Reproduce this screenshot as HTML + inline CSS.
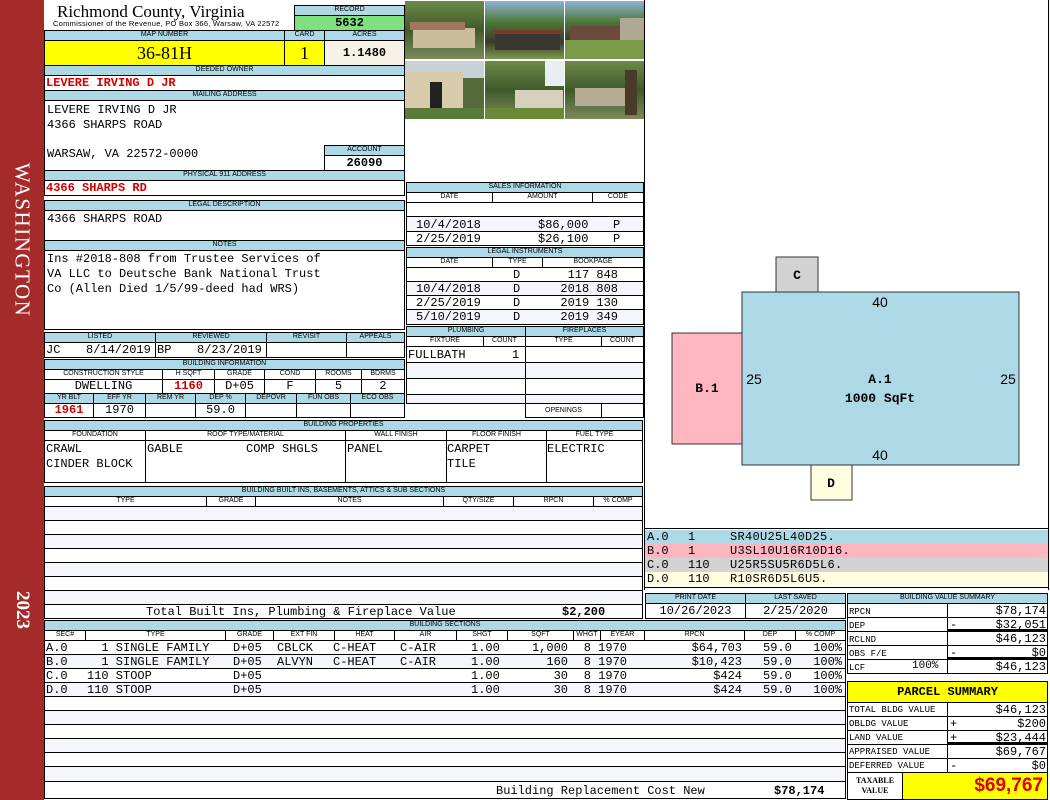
<!DOCTYPE html>
<html><head><meta charset="utf-8"><style>
*{margin:0;padding:0;box-sizing:border-box}
body{width:1050px;height:800px;position:relative;background:#fff;overflow:hidden;font-family:"Liberation Mono",monospace;color:#000}
.a{position:absolute}
.h{position:absolute;background:#add8e6;border:1px solid #000;font:7px/8px "Liberation Sans",sans-serif;text-align:center;white-space:nowrap;overflow:hidden}
.c{position:absolute;border:1px solid #000;font:8px/9px "Liberation Sans",sans-serif;text-align:center;white-space:nowrap;background:#fff}
.b{position:absolute;border:1px solid #000;background:#fff}
.m{position:absolute;font:12px/13px "Liberation Mono",monospace;white-space:pre}
.r{color:#d40000;font-weight:bold}
.st{background:#f4f6fb}
.t{position:absolute;font:12px/14px "Liberation Mono",monospace;white-space:pre}
.rt{position:absolute;font:12px/14px "Liberation Mono",monospace;white-space:pre;text-align:right}
</style></head><body>
<!-- sidebar -->
<div class="a" style="left:0;top:0;width:44px;height:800px;background:#a52a2a"></div>
<div class="a" style="left:22px;top:240px;width:0;height:0"><div style="position:absolute;transform:translate(-50%,-50%) rotate(90deg);color:#fff;font:21px 'Liberation Serif',serif;letter-spacing:1.5px;white-space:nowrap">WASHINGTON</div></div>
<div class="a" style="left:22px;top:610px;width:0;height:0"><div style="position:absolute;transform:translate(-50%,-50%) rotate(90deg);color:#fff;font:bold 19px 'Liberation Serif',serif;white-space:nowrap">2023</div></div>

<!-- title -->
<div class="a" style="left:57px;top:2px;font:17px/19px 'Liberation Serif',serif">Richmond County, Virginia</div>
<div class="a" style="left:53px;top:20px;font:7.5px/8px 'Liberation Sans',sans-serif;letter-spacing:0.25px">Commissioner of the Revenue, PO Box 366, Warsaw, VA 22572</div>
<div class="h" style="left:294px;top:5px;width:111px;height:11px">RECORD</div>
<div class="b" style="left:294px;top:15px;width:111px;height:16px;background:#7fe07f;font:bold 12px/14px 'Liberation Mono';text-align:center">5632</div>
<div class="h" style="left:44px;top:30px;width:241px;height:11px">MAP NUMBER</div>
<div class="h" style="left:284px;top:30px;width:41px;height:11px">CARD</div>
<div class="h" style="left:324px;top:30px;width:81px;height:11px">ACRES</div>
<div class="b" style="left:44px;top:40px;width:241px;height:26px;background:#ffff00;font:18px/24px 'Liberation Serif',serif;text-align:center">36-81H</div>
<div class="b" style="left:284px;top:40px;width:41px;height:26px;background:#ffff00;font:18px/24px 'Liberation Serif',serif;text-align:center">1</div>
<div class="b" style="left:324px;top:40px;width:81px;height:26px;background:#f5f3e6;font:bold 12px/24px 'Liberation Mono';text-align:center">1.1480</div>
<div class="h" style="left:44px;top:65px;width:361px;height:11px">DEEDED OWNER</div>
<div class="b" style="left:44px;top:75px;width:361px;height:16px"></div>
<div class="m r" style="left:46px;top:77px">LEVERE IRVING D JR</div>
<div class="h" style="left:44px;top:90px;width:361px;height:11px">MAILING ADDRESS</div>
<div class="b" style="left:44px;top:100px;width:361px;height:71px"></div>
<div class="m" style="left:47px;top:103px;line-height:15px">LEVERE IRVING D JR
4366 SHARPS ROAD</div>
<div class="m" style="left:47px;top:148px">WARSAW, VA 22572-0000</div>
<div class="h" style="left:324px;top:145px;width:81px;height:11px">ACCOUNT</div>
<div class="b" style="left:324px;top:155px;width:81px;height:16px;font:bold 12px/14px 'Liberation Mono';text-align:center">26090</div>
<div class="h" style="left:44px;top:170px;width:361px;height:11px">PHYSICAL 911 ADDRESS</div>
<div class="b" style="left:44px;top:180px;width:361px;height:16px"></div>
<div class="m r" style="left:46px;top:182px">4366 SHARPS RD</div>
<div class="h" style="left:44px;top:200px;width:361px;height:11px">LEGAL DESCRIPTION</div>
<div class="b" style="left:44px;top:210px;width:361px;height:31px"></div>
<div class="m" style="left:47px;top:213px">4366 SHARPS ROAD</div>
<div class="h" style="left:44px;top:240px;width:361px;height:11px">NOTES</div>
<div class="b" style="left:44px;top:250px;width:361px;height:80px"></div>
<div class="m" style="left:47px;top:252px;line-height:15px">Ins #2018-808 from Trustee Services of
VA LLC to Deutsche Bank National Trust
Co (Allen Died 1/5/99-deed had WRS)</div>

<!-- listed -->
<div class="h" style="left:44px;top:332px;width:112px;height:11px">LISTED</div>
<div class="h" style="left:155px;top:332px;width:112px;height:11px">REVIEWED</div>
<div class="h" style="left:266px;top:332px;width:81px;height:11px">REVISIT</div>
<div class="h" style="left:346px;top:332px;width:59px;height:11px">APPEALS</div>
<div class="b" style="left:44px;top:342px;width:112px;height:16px"></div>
<div class="b" style="left:155px;top:342px;width:112px;height:16px"></div>
<div class="b" style="left:266px;top:342px;width:81px;height:16px"></div>
<div class="b" style="left:346px;top:342px;width:59px;height:16px"></div>
<div class="m" style="left:46px;top:344px">JC</div><div class="m" style="left:86px;top:344px">8/14/2019</div>
<div class="m" style="left:157px;top:344px">BP</div><div class="m" style="left:197px;top:344px">8/23/2019</div>

<!-- building info -->
<div class="h" style="left:44px;top:359px;width:361px;height:11px">BUILDING INFORMATION</div>
<div class="h" style="left:44px;top:369px;width:119px;height:11px;background:#fff">CONSTRUCTION STYLE</div>
<div class="h" style="left:162px;top:369px;width:53px;height:11px;background:#fff">H SQFT</div>
<div class="h" style="left:214px;top:369px;width:51px;height:11px;background:#fff">GRADE</div>
<div class="h" style="left:264px;top:369px;width:52px;height:11px;background:#fff">COND</div>
<div class="h" style="left:315px;top:369px;width:47px;height:11px;background:#fff">ROOMS</div>
<div class="h" style="left:361px;top:369px;width:44px;height:11px;background:#fff">BDRMS</div>
<div class="b" style="left:44px;top:379px;width:119px;height:15px;font:12px/13px 'Liberation Mono';text-align:center">DWELLING</div>
<div class="b r" style="left:162px;top:379px;width:53px;height:15px;font:bold 12px/13px 'Liberation Mono';text-align:center">1160</div>
<div class="b" style="left:214px;top:379px;width:51px;height:15px;font:12px/13px 'Liberation Mono';text-align:center">D+05</div>
<div class="b" style="left:264px;top:379px;width:52px;height:15px;font:12px/13px 'Liberation Mono';text-align:center">F</div>
<div class="b" style="left:315px;top:379px;width:47px;height:15px;font:12px/13px 'Liberation Mono';text-align:center">5</div>
<div class="b" style="left:361px;top:379px;width:44px;height:15px;font:12px/13px 'Liberation Mono';text-align:center">2</div>
<div class="h" style="left:44px;top:393px;width:50px;height:11px">YR BLT</div>
<div class="h" style="left:93px;top:393px;width:53px;height:11px">EFF YR</div>
<div class="h" style="left:145px;top:393px;width:51px;height:11px">REM YR</div>
<div class="h" style="left:195px;top:393px;width:51px;height:11px">DEP %</div>
<div class="h" style="left:245px;top:393px;width:52px;height:11px">DEPOVR</div>
<div class="h" style="left:296px;top:393px;width:55px;height:11px">FUN OBS</div>
<div class="h" style="left:350px;top:393px;width:55px;height:11px">ECO OBS</div>
<div class="b r" style="left:44px;top:403px;width:50px;height:15px;font:bold 12px/13px 'Liberation Mono';text-align:center">1961</div>
<div class="b" style="left:93px;top:403px;width:53px;height:15px;font:12px/13px 'Liberation Mono';text-align:center">1970</div>
<div class="b" style="left:145px;top:403px;width:51px;height:15px"></div>
<div class="b" style="left:195px;top:403px;width:51px;height:15px;font:12px/13px 'Liberation Mono';text-align:center">59.0</div>
<div class="b" style="left:245px;top:403px;width:52px;height:15px"></div>
<div class="b" style="left:296px;top:403px;width:55px;height:15px"></div>
<div class="b" style="left:350px;top:403px;width:55px;height:15px"></div>

<!-- photos -->
<svg class="a" style="left:405px;top:0" width="240" height="120">
<defs>
<linearGradient id="g1" x1="0" y1="0" x2="0" y2="1"><stop offset="0" stop-color="#6d8a4a"/><stop offset="0.5" stop-color="#3f5a2a"/><stop offset="1" stop-color="#7d8a5a"/></linearGradient>
<linearGradient id="g2" x1="0" y1="0" x2="0" y2="1"><stop offset="0" stop-color="#8fb2d8"/><stop offset="0.35" stop-color="#4d7a3a"/><stop offset="0.7" stop-color="#3a3a2c"/><stop offset="1" stop-color="#7a9a4a"/></linearGradient>
</defs>
<rect x="0" y="1" width="79" height="58" fill="url(#g1)"/><rect x="8" y="28" width="62" height="20" fill="#c8bc9a"/><rect x="5" y="22" width="55" height="8" fill="#a07860"/>
<rect x="80" y="1" width="79" height="58" fill="url(#g2)"/><rect x="90" y="32" width="65" height="18" fill="#3a3530"/><rect x="88" y="30" width="68" height="4" fill="#7a3a2a"/>
<rect x="160" y="1" width="80" height="58" fill="url(#g2)"/><rect x="165" y="26" width="50" height="14" fill="#6a4a3a"/><rect x="215" y="18" width="25" height="30" fill="#b0a890"/><rect x="160" y="40" width="80" height="19" fill="#7a9a4a"/>
<rect x="0" y="61" width="79" height="58" fill="#c9d0d6"/><rect x="0" y="72" width="58" height="40" fill="#d8ccac"/><rect x="25" y="82" width="12" height="30" fill="#222"/><rect x="0" y="108" width="79" height="11" fill="#5a7a3a"/><rect x="58" y="78" width="21" height="30" fill="#556a3a"/>
<rect x="80" y="61" width="79" height="58" fill="url(#g1)"/><rect x="110" y="90" width="48" height="20" fill="#d6d0bc"/><rect x="80" y="108" width="79" height="11" fill="#6a8a3a"/><rect x="140" y="61" width="19" height="25" fill="#e8eef2"/>
<rect x="160" y="61" width="80" height="58" fill="url(#g1)"/><rect x="170" y="88" width="55" height="18" fill="#b8ab94"/><rect x="220" y="70" width="12" height="45" fill="#4a3a2a"/>
</svg>

<!-- sales -->
<div class="h" style="left:406px;top:182px;width:238px;height:11px">SALES INFORMATION</div>
<div class="h" style="left:406px;top:192px;width:87px;height:11px;background:#fff">DATE</div>
<div class="h" style="left:492px;top:192px;width:101px;height:11px;background:#fff">AMOUNT</div>
<div class="h" style="left:592px;top:192px;width:52px;height:11px;background:#fff">CODE</div>
<div class="b" style="left:406px;top:202px;width:238px;height:15px"></div>
<div class="b st" style="left:406px;top:216px;width:238px;height:16px"></div>
<div class="b" style="left:406px;top:231px;width:238px;height:15px"></div>
<div class="t" style="left:416px;top:218px">10/4/2018</div><div class="t" style="left:538px;top:218px">$86,000</div><div class="t" style="left:613px;top:218px">P</div>
<div class="t" style="left:416px;top:232px">2/25/2019</div><div class="t" style="left:538px;top:232px">$26,100</div><div class="t" style="left:613px;top:232px">P</div>
<div class="h" style="left:406px;top:247px;width:238px;height:11px">LEGAL INSTRUMENTS</div>
<div class="h" style="left:406px;top:257px;width:87px;height:11px;background:#fff">DATE</div>
<div class="h" style="left:492px;top:257px;width:51px;height:11px;background:#fff">TYPE</div>
<div class="h" style="left:542px;top:257px;width:102px;height:11px;background:#fff">BOOKPAGE</div>
<div class="b" style="left:406px;top:267px;width:238px;height:15px"></div>
<div class="b st" style="left:406px;top:281px;width:238px;height:15px"></div>
<div class="b" style="left:406px;top:295px;width:238px;height:15px"></div>
<div class="b st" style="left:406px;top:309px;width:238px;height:16px"></div>
<div class="t" style="left:416px;top:268px"> 
10/4/2018
2/25/2019
5/10/2019</div>
<div class="t" style="left:513px;top:268px">D
D
D
D</div>
<div class="rt" style="left:540px;top:268px;width:78px">117 848
2018 808
2019 130
2019 349</div>

<!-- plumbing -->
<div class="h" style="left:406px;top:326px;width:120px;height:11px">PLUMBING</div>
<div class="h" style="left:525px;top:326px;width:119px;height:11px">FIREPLACES</div>
<div class="h" style="left:406px;top:336px;width:78px;height:11px;background:#fff">FIXTURE</div>
<div class="h" style="left:483px;top:336px;width:43px;height:11px;background:#fff">COUNT</div>
<div class="h" style="left:525px;top:336px;width:77px;height:11px;background:#fff">TYPE</div>
<div class="h" style="left:601px;top:336px;width:43px;height:11px;background:#fff">COUNT</div>
<div class="b" style="left:406px;top:346px;width:120px;height:17px"></div>
<div class="b st" style="left:406px;top:362px;width:120px;height:17px"></div>
<div class="b" style="left:406px;top:378px;width:120px;height:17px"></div>
<div class="b st" style="left:406px;top:394px;width:120px;height:10px"></div>
<div class="b" style="left:525px;top:346px;width:119px;height:17px"></div>
<div class="b st" style="left:525px;top:362px;width:119px;height:17px"></div>
<div class="b" style="left:525px;top:378px;width:119px;height:17px"></div>
<div class="b st" style="left:525px;top:394px;width:119px;height:10px"></div>
<div class="c" style="left:525px;top:403px;width:77px;height:15px;line-height:13px;font-size:7px">OPENINGS</div>
<div class="b" style="left:601px;top:403px;width:43px;height:15px"></div>
<div class="t" style="left:408px;top:348px">FULLBATH</div><div class="t" style="left:512px;top:348px">1</div>

<!-- building properties -->
<div class="h" style="left:44px;top:420px;width:599px;height:11px">BUILDING PROPERTIES</div>
<div class="h" style="left:44px;top:430px;width:102px;height:11px;background:#fff">FOUNDATION</div>
<div class="h" style="left:145px;top:430px;width:201px;height:11px;background:#fff">ROOF TYPE/MATERIAL</div>
<div class="h" style="left:345px;top:430px;width:102px;height:11px;background:#fff">WALL FINISH</div>
<div class="h" style="left:446px;top:430px;width:101px;height:11px;background:#fff">FLOOR FINISH</div>
<div class="h" style="left:546px;top:430px;width:97px;height:11px;background:#fff">FUEL TYPE</div>
<div class="b" style="left:44px;top:440px;width:102px;height:43px"></div>
<div class="b" style="left:145px;top:440px;width:201px;height:43px"></div>
<div class="b" style="left:345px;top:440px;width:102px;height:43px"></div>
<div class="b" style="left:446px;top:440px;width:101px;height:43px"></div>
<div class="b" style="left:546px;top:440px;width:97px;height:43px"></div>
<div class="t" style="left:46px;top:442px;line-height:15px">CRAWL
CINDER BLOCK</div>
<div class="t" style="left:147px;top:442px">GABLE</div><div class="t" style="left:246px;top:442px">COMP SHGLS</div>
<div class="t" style="left:347px;top:442px">PANEL</div>
<div class="t" style="left:447px;top:442px;line-height:15px">CARPET
TILE</div>
<div class="t" style="left:547px;top:442px">ELECTRIC</div>

<!-- built ins -->
<div class="h" style="left:44px;top:486px;width:599px;height:11px">BUILDING BUILT INS, BASEMENTS, ATTICS &amp; SUB SECTIONS</div>
<div class="h" style="left:44px;top:496px;width:163px;height:11px;background:#fff">TYPE</div>
<div class="h" style="left:206px;top:496px;width:50px;height:11px;background:#fff">GRADE</div>
<div class="h" style="left:255px;top:496px;width:189px;height:11px;background:#fff">NOTES</div>
<div class="h" style="left:443px;top:496px;width:71px;height:11px;background:#fff">QTY/SIZE</div>
<div class="h" style="left:513px;top:496px;width:81px;height:11px;background:#fff">RPCN</div>
<div class="h" style="left:593px;top:496px;width:50px;height:11px;background:#fff">% COMP</div>
<div class="b st" style="left:44px;top:506px;width:599px;height:15px"></div>
<div class="b" style="left:44px;top:520px;width:599px;height:15px"></div>
<div class="b st" style="left:44px;top:534px;width:599px;height:15px"></div>
<div class="b" style="left:44px;top:548px;width:599px;height:15px"></div>
<div class="b st" style="left:44px;top:562px;width:599px;height:15px"></div>
<div class="b" style="left:44px;top:576px;width:599px;height:15px"></div>
<div class="b st" style="left:44px;top:590px;width:599px;height:15px"></div>
<div class="b" style="left:44px;top:604px;width:599px;height:15px"></div>
<div class="t" style="left:146px;top:605px">Total Built Ins, Plumbing &amp; Fireplace Value</div>
<div class="t" style="left:562px;top:605px;font-weight:bold">$2,200</div>

<!-- building sections -->
<div class="h" style="left:44px;top:620px;width:802px;height:11px">BUILDING SECTIONS</div>
<div class="h" style="left:44px;top:630px;width:42px;height:11px;background:#fff">SEC#</div>
<div class="h" style="left:85px;top:630px;width:141px;height:11px;background:#fff">TYPE</div>
<div class="h" style="left:225px;top:630px;width:49px;height:11px;background:#fff">GRADE</div>
<div class="h" style="left:273px;top:630px;width:62px;height:11px;background:#fff">EXT FIN</div>
<div class="h" style="left:334px;top:630px;width:61px;height:11px;background:#fff">HEAT</div>
<div class="h" style="left:394px;top:630px;width:63px;height:11px;background:#fff">AIR</div>
<div class="h" style="left:456px;top:630px;width:52px;height:11px;background:#fff">SHGT</div>
<div class="h" style="left:507px;top:630px;width:67px;height:11px;background:#fff">SQFT</div>
<div class="h" style="left:573px;top:630px;width:28px;height:11px;background:#fff">WHGT</div>
<div class="h" style="left:600px;top:630px;width:45px;height:11px;background:#fff">EYEAR</div>
<div class="h" style="left:644px;top:630px;width:101px;height:11px;background:#fff">RPCN</div>
<div class="h" style="left:744px;top:630px;width:52px;height:11px;background:#fff">DEP</div>
<div class="h" style="left:795px;top:630px;width:51px;height:11px;background:#fff">% COMP</div>
<div class="b" style="left:44px;top:640px;width:802px;height:15px"></div>
<div class="b st" style="left:44px;top:654px;width:802px;height:15px"></div>
<div class="b" style="left:44px;top:668px;width:802px;height:15px"></div>
<div class="b st" style="left:44px;top:682px;width:802px;height:15px"></div>
<div class="b" style="left:44px;top:696px;width:802px;height:15px"></div>
<div class="b st" style="left:44px;top:710px;width:802px;height:15px"></div>
<div class="b" style="left:44px;top:724px;width:802px;height:15px"></div>
<div class="b st" style="left:44px;top:738px;width:802px;height:15px"></div>
<div class="b" style="left:44px;top:752px;width:802px;height:15px"></div>
<div class="b st" style="left:44px;top:766px;width:802px;height:16px"></div>
<div class="b" style="left:44px;top:781px;width:802px;height:18px"></div>
<div class="t" style="left:46px;top:641px">A.0
B.0
C.0
D.0</div>
<div class="t" style="left:87px;top:641px">  1 SINGLE FAMILY
  1 SINGLE FAMILY
110 STOOP
110 STOOP</div>
<div class="t" style="left:233px;top:641px">D+05
D+05
D+05
D+05</div>
<div class="t" style="left:277px;top:641px">CBLCK
ALVYN</div>
<div class="t" style="left:333px;top:641px">C-HEAT
C-HEAT</div>
<div class="t" style="left:400px;top:641px">C-AIR
C-AIR</div>
<div class="t" style="left:471px;top:641px">1.00
1.00
1.00
1.00</div>
<div class="rt" style="left:507px;top:641px;width:61px">1,000
160
30
30</div>
<div class="rt" style="left:573px;top:641px;width:54px">8 1970
8 1970
8 1970
8 1970</div>
<div class="rt" style="left:646px;top:641px;width:96px">$64,703
$10,423
$424
$424</div>
<div class="t" style="left:763px;top:641px">59.0
59.0
59.0
59.0</div>
<div class="rt" style="left:796px;top:641px;width:46px">100%
100%
100%
100%</div>
<div class="t" style="left:496px;top:784px">Building Replacement Cost New</div>
<div class="t" style="left:774px;top:784px;font-weight:bold">$78,174</div>

<!-- sketch -->
<div class="a" style="left:644px;top:0;width:1px;height:590px;background:#000"></div>
<div class="a" style="left:1048px;top:0;width:1px;height:590px;background:#000"></div>
<svg class="a" style="left:645px;top:250px" width="400" height="260">
<rect x="131" y="7" width="42" height="35" fill="#d3d3d3" stroke="#333"/>
<rect x="27" y="83" width="70" height="111" fill="#ffb6c1" stroke="#333"/>
<rect x="166" y="215" width="41" height="35" fill="#ffffe0" stroke="#333"/>
<rect x="97" y="42" width="277" height="173" fill="#add8e6" stroke="#333"/>
<g font-family="Liberation Mono" font-weight="bold" font-size="13" text-anchor="middle">
<text x="152" y="29">C</text><text x="62" y="142">B.1</text><text x="186" y="237">D</text><text x="235" y="133">A.1</text>
<text x="235" y="152">1000 SqFt</text>
</g>
<g font-family="Liberation Sans" font-size="14" text-anchor="middle">
<text x="235" y="57">40</text><text x="235" y="210">40</text><text x="109" y="134">25</text><text x="363" y="134">25</text>
</g>
</svg>
<div class="a" style="left:644px;top:528px;width:405px;height:60px;border:1px solid #000"></div>
<div class="a" style="left:645px;top:530px;width:403px;height:14px;background:#add8e6"></div>
<div class="a" style="left:645px;top:544px;width:403px;height:14px;background:#ffb6c1"></div>
<div class="a" style="left:645px;top:558px;width:403px;height:14px;background:#d3d3d3"></div>
<div class="a" style="left:645px;top:572px;width:403px;height:14px;background:#ffffe0"></div>
<div class="t" style="left:647px;top:530px">A.0
B.0
C.0
D.0</div>
<div class="t" style="left:688px;top:530px">1
1
110
110</div>
<div class="t" style="left:730px;top:530px;letter-spacing:0.3px">SR40U25L40D25.
U3SL10U16R10D16.
U25R5SU5R6D5L6.
R10SR6D5L6U5.</div>

<!-- print date -->
<div class="h" style="left:645px;top:593px;width:101px;height:11px">PRINT DATE</div>
<div class="h" style="left:745px;top:593px;width:101px;height:11px">LAST SAVED</div>
<div class="b" style="left:645px;top:603px;width:101px;height:16px;font:12px/14px 'Liberation Mono';text-align:center">10/26/2023</div>
<div class="b" style="left:745px;top:603px;width:101px;height:16px;font:12px/14px 'Liberation Mono';text-align:center">2/25/2020</div>

<!-- value summary -->
<div class="h" style="left:847px;top:593px;width:201px;height:11px">BUILDING VALUE SUMMARY</div>
<div class="b" style="left:847px;top:603px;width:101px;height:15px"></div><div class="b" style="left:947px;top:603px;width:101px;height:15px"></div>
<div class="b" style="left:847px;top:617px;width:101px;height:15px"></div><div class="b" style="left:947px;top:617px;width:101px;height:15px;border-bottom:3px solid #000"></div>
<div class="b" style="left:847px;top:631px;width:101px;height:15px"></div><div class="b" style="left:947px;top:631px;width:101px;height:15px"></div>
<div class="b" style="left:847px;top:645px;width:101px;height:15px"></div><div class="b" style="left:947px;top:645px;width:101px;height:15px;border-bottom:3px solid #000"></div>
<div class="b" style="left:847px;top:659px;width:101px;height:15px"></div><div class="b" style="left:947px;top:659px;width:101px;height:15px"></div>
<div class="m" style="left:849px;top:605px;font-size:9px;line-height:14px">RPCN
DEP
RCLND
OBS F/E
LCF</div>
<div class="m" style="left:912px;top:660px;font-size:11px">100%</div>
<div class="t" style="left:950px;top:604px"> 
-
 
-</div>
<div class="rt" style="left:950px;top:604px;width:96px">$78,174
$32,051
$46,123
$0
$46,123</div>

<!-- parcel summary -->
<div class="b" style="left:847px;top:681px;width:201px;height:22px;background:#ffff00;font:bold 12px/20px 'Liberation Mono';text-align:center">PARCEL SUMMARY</div>
<div class="b" style="left:847px;top:702px;width:101px;height:15px"></div><div class="b" style="left:947px;top:702px;width:101px;height:15px"></div>
<div class="b" style="left:847px;top:716px;width:101px;height:15px"></div><div class="b" style="left:947px;top:716px;width:101px;height:15px"></div>
<div class="b" style="left:847px;top:730px;width:101px;height:15px"></div><div class="b" style="left:947px;top:730px;width:101px;height:15px;border-bottom:3px solid #000"></div>
<div class="b" style="left:847px;top:744px;width:101px;height:15px"></div><div class="b" style="left:947px;top:744px;width:101px;height:15px"></div>
<div class="b" style="left:847px;top:758px;width:101px;height:15px"></div><div class="b" style="left:947px;top:758px;width:101px;height:15px"></div>
<div class="m" style="left:849px;top:703px;font-size:9px;line-height:14px">TOTAL BLDG VALUE
OBLDG VALUE
LAND VALUE
APPRAISED VALUE
DEFERRED VALUE</div>
<div class="t" style="left:950px;top:703px"> 
+
+
 
-</div>
<div class="rt" style="left:950px;top:703px;width:96px">$46,123
$200
$23,444
$69,767
$0</div>
<div class="b" style="left:847px;top:772px;width:56px;height:28px;font:bold 8px/10px 'Liberation Serif',serif;text-align:center;padding-top:3px">TAXABLE<br>VALUE</div>
<div class="b" style="left:902px;top:772px;width:146px;height:28px;background:#ffff00;color:#e00000;font:bold 19px/26px 'Liberation Sans',sans-serif;text-align:right;padding-right:4px">$69,767</div>
</body></html>
